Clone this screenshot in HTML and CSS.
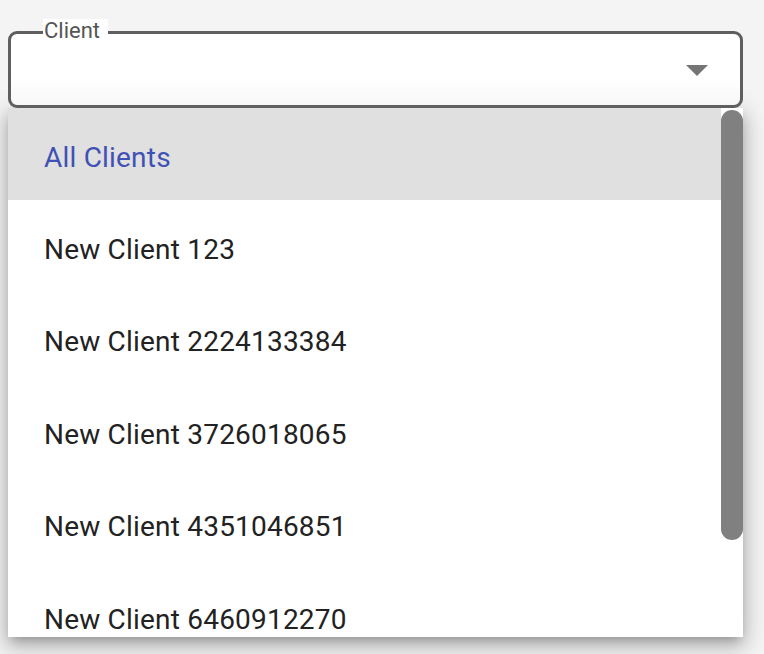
FILE: index.html
```html
<!DOCTYPE html>
<html lang="en">
<head>
  <meta charset="UTF-8" />
  <meta name="viewport" content="width=device-width, initial-scale=1.0" />
  <title>Client select</title>
  <link rel="stylesheet" href="styles.css">
</head>
<body>

  <div class="picker">
    <!-- Select field -->
    <div class="field">
      <span class="field-label">Client</span>
      <svg class="arrow" width="22" height="11" viewBox="0 0 22 11">
        <path d="M0 0 L22 0 L11 11 Z" fill="#757575" />
      </svg>
    </div>

    <!-- Open menu -->
    <div class="menu">
      <ul class="options">
        <li class="option selected">All Clients</li>
        <li class="option">New Client 123</li>
        <li class="option">New Client 2224133384</li>
        <li class="option">New Client 3726018065</li>
        <li class="option">New Client 4351046851</li>
        <li class="option">New Client 6460912270</li>
      </ul>
      <div class="scrollbar">
        <div class="thumb"></div>
      </div>
    </div>
  </div>

</body>
</html>
```

FILE: styles.css
```css
body {
  margin: 0;
  padding: 0;
  background-color: #f4f4f4;
  font-family: Roboto, 'Noto Sans', sans-serif;
  height: 654px;
  overflow: hidden;
}

.picker {
  padding: 31px 21px 0 8px;
}

.field {
  position: relative;
  height: 77px;
  box-sizing: border-box;
  border: 3px solid #5f5f5f;
  border-radius: 9px;
  background: linear-gradient(to bottom, #ffffff 60%, #f7f7f7);
  display: flex;
  align-items: center;
  justify-content: flex-end;
  padding-right: 32px;
}

.field-label {
  position: absolute;
  top: -15px;
  left: 32px;
  padding: 0 8px 0 1px;
  background-color: #ffffff;
  color: #555;
  font-size: 22px;
  line-height: 24px;
}

.arrow {
  margin-top: 2px;
}

.menu {
  display: flex;
  height: 529px;
  background-color: #fff;
  overflow: hidden;
  box-shadow: 0 6px 10px -4px rgba(0, 0, 0, 0.25),
              0 10px 18px 2px rgba(0, 0, 0, 0.14),
              0 4px 24px 4px rgba(0, 0, 0, 0.12);
}

.options {
  flex: 1;
  list-style: none;
  margin: 0;
  padding: 0;
}

.option {
  height: 92.4px;
  box-sizing: border-box;
  display: flex;
  align-items: center;
  padding: 6px 0 0 36px;
  font-size: 28px;
  letter-spacing: 0.2px;
  color: #222;
}

.option.selected {
  background-color: #e0e0e0;
  color: #3f51b5;
}

.scrollbar {
  width: 22px;
  padding-top: 2px;
}

.thumb {
  height: 430px;
  background-color: #808080;
  border-radius: 11px;
}
```
